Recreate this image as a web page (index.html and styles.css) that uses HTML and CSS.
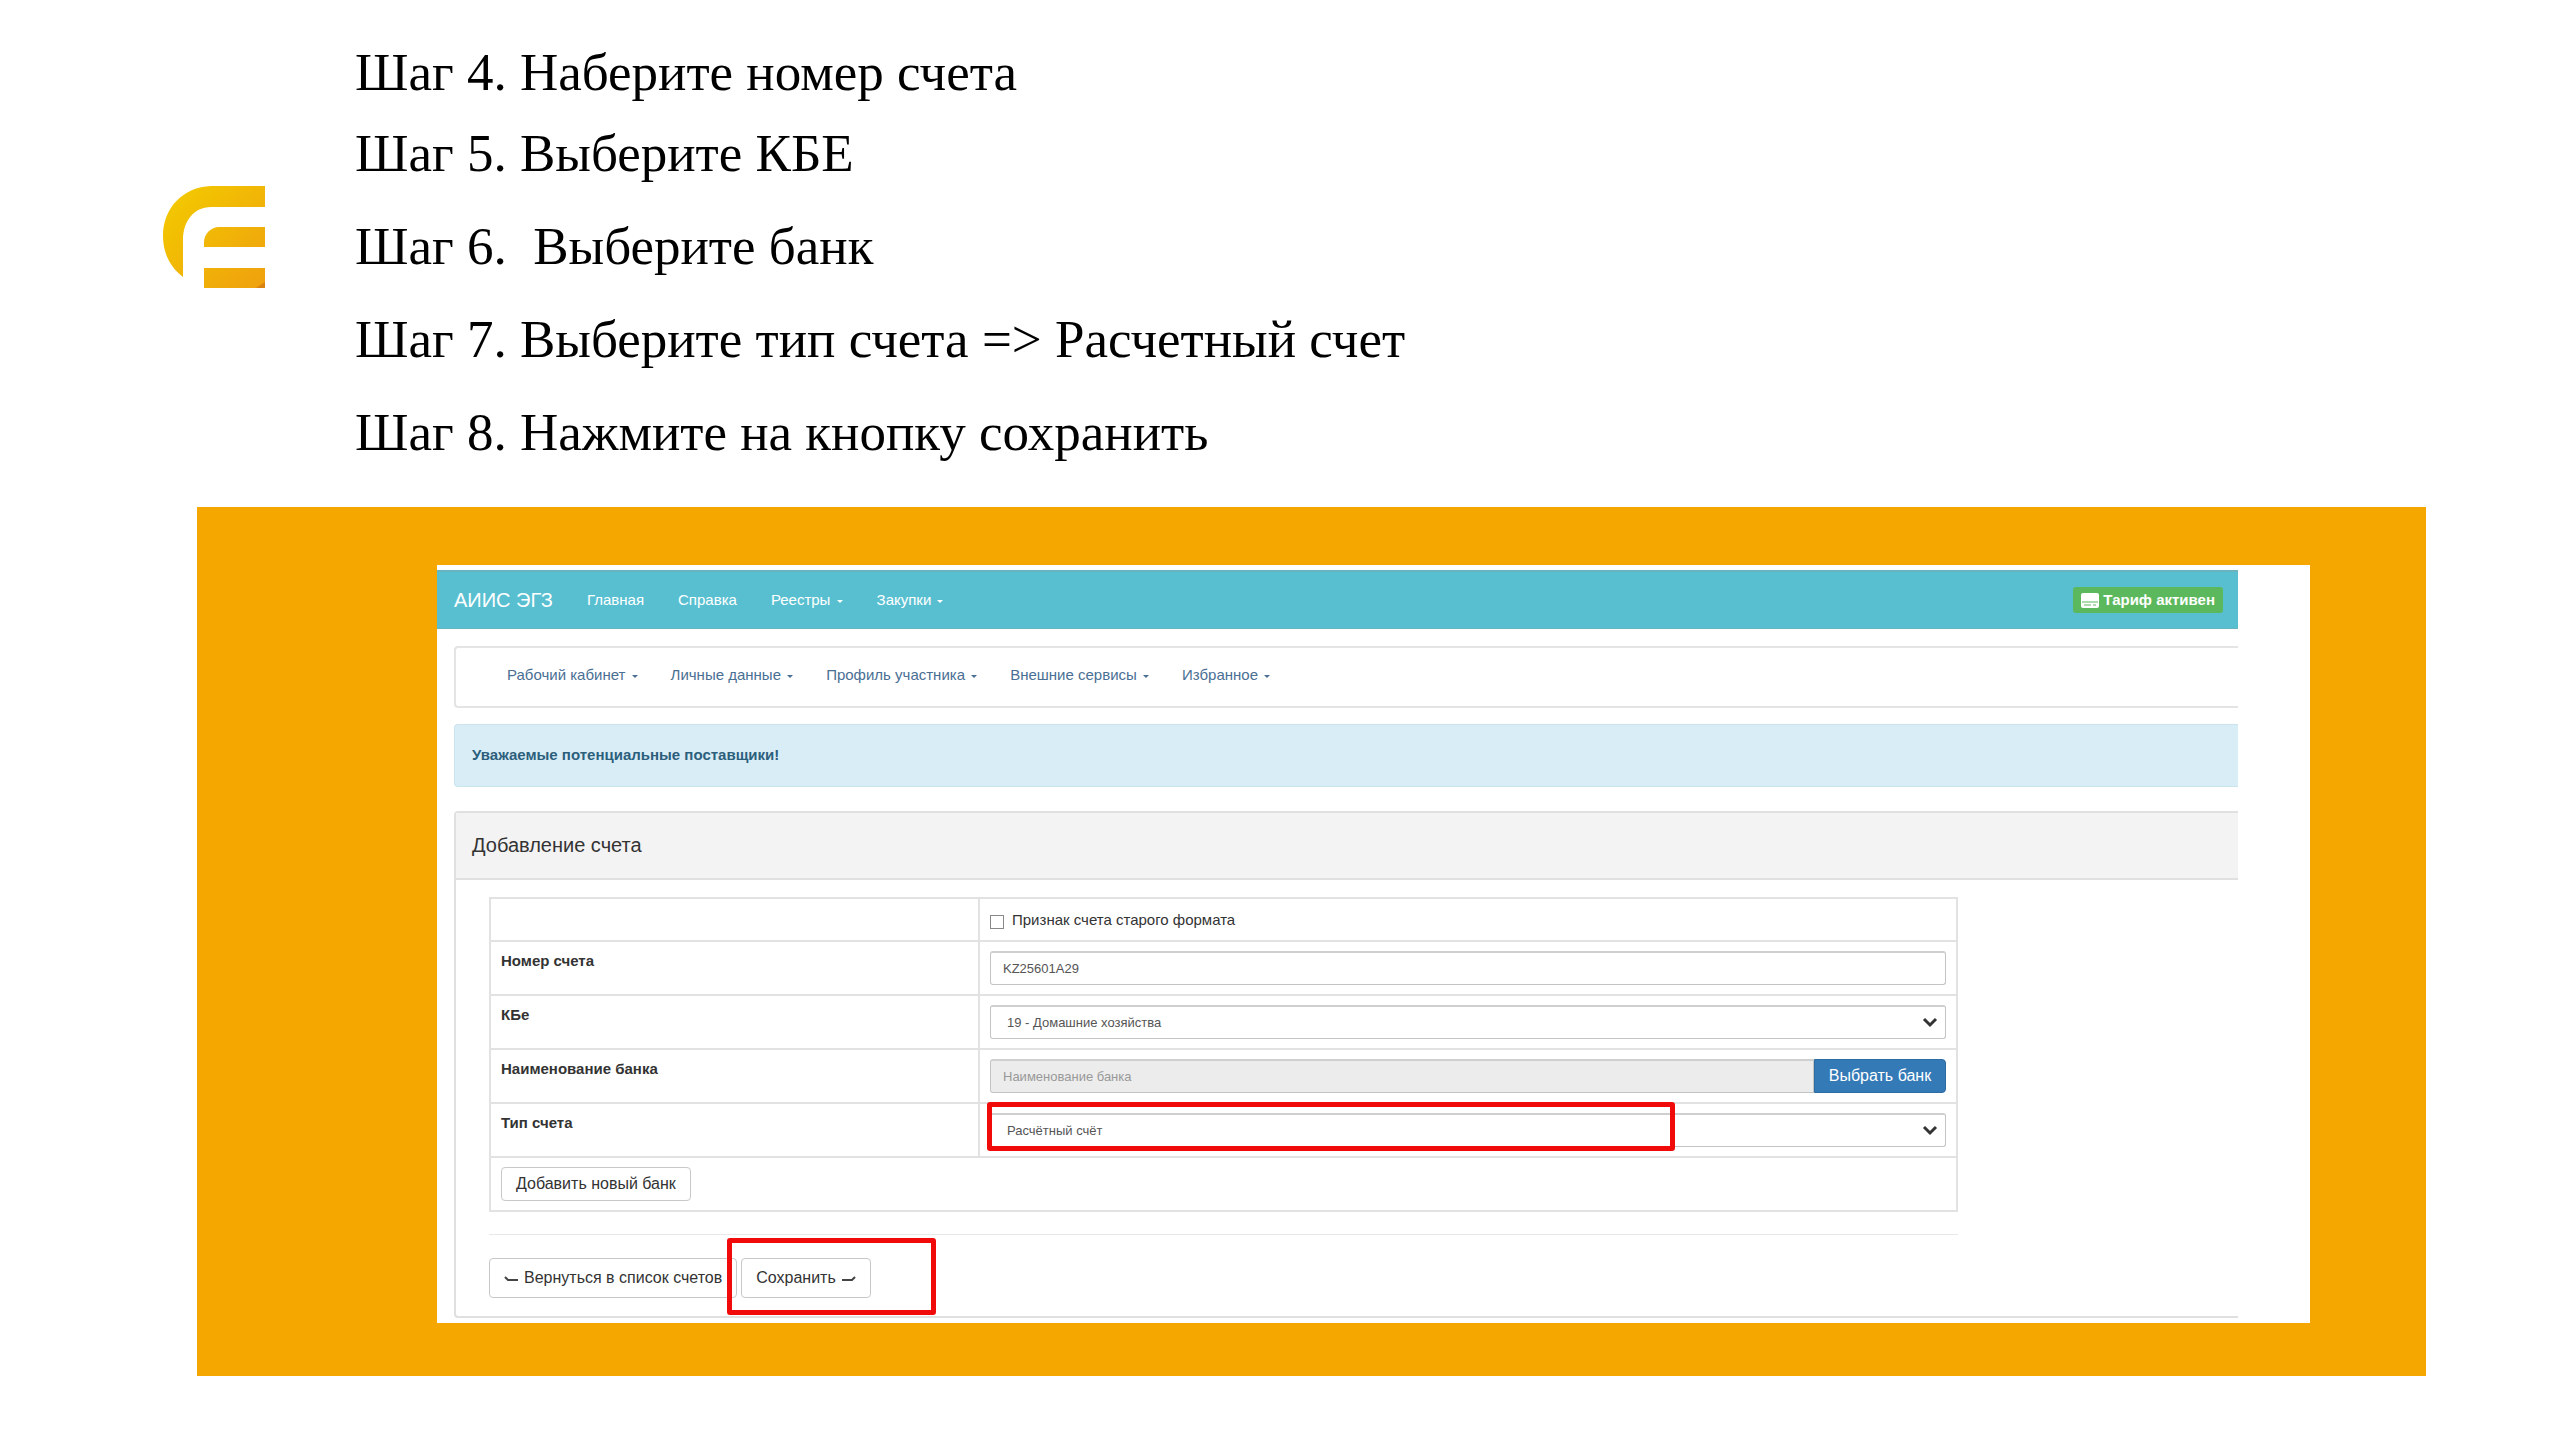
FILE: index.html
```html
<!DOCTYPE html>
<html lang="ru">
<head>
  <meta charset="UTF-8">
  <meta name="viewport" content="width=device-width, initial-scale=1.0">
  <title>Добавление счета</title>
  <link rel="stylesheet" href="styles.css">
</head>
<body>
  <header class="intro">
    <svg class="logo" viewBox="0 0 102 102" aria-hidden="true">
      <defs>
        <linearGradient id="gold" gradientUnits="userSpaceOnUse" x1="10" y1="10" x2="102" y2="102">
          <stop offset="0" stop-color="#f3c800"/>
          <stop offset="1" stop-color="#efa00e"/>
        </linearGradient>
      </defs>
      <g fill="url(#gold)">
        <path d="M102 0H48C20 1 0 22 0 50c0 17 7 31 20 41V54c0-19 11-33 28-33h54z"/>
        <path d="M102 41H56c-8 0-15 7-15 15v5h61z"/>
        <path d="M41 82h61v20H41z"/>
      </g>
      <path d="M102 96v6h-9z" fill="#d9820f"/>
    </svg>
    <div class="steps">
      <p class="step step-first">Шаг 4. Наберите номер счета</p>
      <p class="step">Шаг 5. Выберите КБЕ</p>
      <p class="step">Шаг 6.&nbsp; Выберите банк</p>
      <p class="step">Шаг 7. Выберите тип счета =&gt; Расчетный счет</p>
      <p class="step">Шаг 8. Нажмите на кнопку сохранить</p>
    </div>
  </header>

  <main class="frame">
    <div class="sheet">
      <nav class="topbar">
        <a class="brand" href="#">АИИС ЭГЗ</a>
        <a href="#">Главная</a>
        <a href="#">Справка</a>
        <a href="#">Реестры <span class="caret"></span></a>
        <a href="#">Закупки <span class="caret"></span></a>
        <a class="badge" href="#">
          <svg width="18" height="15" viewBox="0 0 18 15" aria-hidden="true">
            <rect width="18" height="15" rx="2" fill="#fff"/>
            <path d="M1 9h16" stroke="#5cb85c" stroke-width="1"/>
            <path d="M3 12h7M12 12h3" stroke="#5cb85c" stroke-width="1"/>
          </svg>
          Тариф активен
        </a>
      </nav>

      <nav class="subnav">
        <a href="#">Рабочий кабинет <span class="caret"></span></a>
        <a href="#">Личные данные <span class="caret"></span></a>
        <a href="#">Профиль участника <span class="caret"></span></a>
        <a href="#">Внешние сервисы <span class="caret"></span></a>
        <a href="#">Избранное <span class="caret"></span></a>
      </nav>

      <div class="alert">Уважаемые потенциальные поставщики!</div>

      <section class="panel">
        <h1 class="panel-title">Добавление счета</h1>
        <form class="panel-body">
          <table class="form-table">
            <tr class="row-check">
              <td class="name"></td>
              <td>
                <label class="check"><input type="checkbox"> Признак счета старого формата</label>
              </td>
            </tr>
            <tr>
              <td class="name"><label for="number">Номер счета</label></td>
              <td><input class="field" type="text" id="number" value="KZ25601A29"></td>
            </tr>
            <tr>
              <td class="name"><label for="kbe">КБе</label></td>
              <td>
                <div class="select">
                  <select class="field" id="kbe"><option>19 - Домашние хозяйства</option></select>
                  <svg class="chevron" viewBox="0 0 16 11" aria-hidden="true"><path d="M2 2l6 6 6-6"/></svg>
                </div>
              </td>
            </tr>
            <tr>
              <td class="name"><label for="bank">Наименование банка</label></td>
              <td>
                <div class="group">
                  <input class="field" type="text" id="bank" placeholder="Наименование банка" readonly>
                  <button class="btn btn-primary" type="button">Выбрать банк</button>
                </div>
              </td>
            </tr>
            <tr>
              <td class="name"><label for="type">Тип счета</label></td>
              <td>
                <div class="select mark-type">
                  <select class="field" id="type"><option>Расчётный счёт</option></select>
                  <svg class="chevron" viewBox="0 0 16 11" aria-hidden="true"><path d="M2 2l6 6 6-6"/></svg>
                </div>
              </td>
            </tr>
            <tr>
              <td colspan="2"><button class="btn" type="button">Добавить новый банк</button></td>
            </tr>
          </table>

          <div class="actions">
            <button class="btn btn-tall" type="button">
              <svg class="arrow" viewBox="0 0 14 8" aria-hidden="true"><path d="M1 3l3 3h10"/></svg>
              Вернуться в список счетов
            </button>
            <div class="mark-save">
              <button class="btn btn-tall" type="submit">
                Сохранить
                <svg class="arrow" viewBox="0 0 14 8" aria-hidden="true"><path d="M13 3l-3 3H0"/></svg>
              </button>
            </div>
          </div>
        </form>
      </section>
    </div>
  </main>
</body>
</html>
```

FILE: styles.css
```css
*, *::after {
  box-sizing: border-box;
}
body {
  margin: 0;
  background: #fff;
  color: #333;
  font-family: "Liberation Sans", Arial, sans-serif;
  font-size: 15px;
  line-height: 20px;
}
a {
  color: inherit;
  text-decoration: none;
}

/* steps */
.intro {
  display: flex;
  align-items: flex-start;
  gap: 90px;
  padding: 42px 134px 45px 163px;
}
.logo {
  width: 102px;
  height: 102px;
  margin-top: 144px;
}
.step {
  margin: 0 0 33px;
  color: #000;
  font-family: "Liberation Serif", "Times New Roman", serif;
  font-size: 53px;
  line-height: 60px;
}
.step-first {
  margin-bottom: 21px;
}
.step:last-child {
  margin-bottom: 0;
}

/* orange frame */
.frame {
  margin: 0 134px 64px 197px;
  padding: 58px 116px 53px 240px;
  background: #f5a700;
}
.sheet {
  padding: 5px 72px 5px 0;
  background: #fff;
}

.topbar {
  display: flex;
  align-items: center;
  gap: 34px;
  height: 59px;
  padding: 0 15px 0 17px;
  background: #58bfd1;
  border-top: 2px solid #67b4be;
  border-bottom: 1px solid #67b4be;
  color: #fff;
}
.brand {
  font-size: 20px;
}
.caret {
  display: inline-block;
  margin-left: 2px;
  border: 3px solid transparent;
  border-top-color: currentColor;
  border-bottom: 0;
  vertical-align: middle;
}
.badge {
  display: flex;
  align-items: center;
  gap: 4px;
  height: 26px;
  margin-left: auto;
  padding: 0 8px;
  border-radius: 3px;
  background: #5cb85c;
  font-weight: bold;
}

.subnav {
  display: flex;
  gap: 33px;
  margin: 17px 0 16px 17px;
  padding: 17px 51px 21px;
  border: 2px solid #e4e4e4;
  border-right: 0;
  border-radius: 4px 0 0 4px;
  color: #4a6f94;
}
.alert {
  margin: 0 0 24px 17px;
  padding: 20px 17px 21px;
  border: 1px solid #cbe3ec;
  border-right: 0;
  border-radius: 4px 0 0 4px;
  background: #d9edf7;
  color: #2c5f7c;
  font-weight: bold;
}

.panel {
  margin-left: 17px;
  border: 2px solid #e0e0e0;
  border-right: 0;
  border-radius: 4px 0 0 4px;
}
.panel-title {
  margin: 0;
  padding: 20px 16px 21px;
  border-bottom: 2px solid #e0e0e0;
  background: #f3f3f3;
  font-size: 20px;
  font-weight: normal;
  line-height: 24px;
}
.panel-body {
  padding: 17px 0 18px 33px;
}

.form-table {
  width: 84%;
  border-collapse: collapse;
  table-layout: fixed;
}
.form-table td {
  height: 54px;
  padding: 8px 10px;
  border: 2px solid #e2e2e2;
}
.form-table .name {
  width: 489px;
  padding-top: 9px;
  vertical-align: top;
  font-weight: bold;
}
.form-table .row-check td {
  height: 43px;
  padding: 6px 10px;
}
.check {
  display: flex;
  align-items: center;
  gap: 8px;
}
.check input {
  appearance: none;
  width: 14px;
  height: 14px;
  margin: 4px 0 0;
  border: 1px solid #888;
  background: #fff;
}
.field {
  display: block;
  width: 100%;
  height: 34px;
  padding: 0 12px;
  border: 1px solid #c4c4c4;
  border-top: 2px solid #cfcfcf;
  border-radius: 3px;
  background: #fff;
  color: #555;
  font: 13px "Liberation Sans", Arial, sans-serif;
}
.field::placeholder {
  color: #999;
}
.select {
  position: relative;
}
.select .field {
  padding-left: 16px;
  appearance: none;
}
.chevron {
  position: absolute;
  top: 12px;
  right: 8px;
  width: 16px;
  height: 11px;
  fill: none;
  stroke: #333;
  stroke-width: 3;
  pointer-events: none;
}
.group {
  display: flex;
}
.group .field {
  flex: 1;
  border-radius: 3px 0 0 3px;
  background: #ececec;
}

.btn {
  display: flex;
  align-items: center;
  gap: 6px;
  height: 34px;
  padding: 0 14px;
  border: 1px solid #c8c8c8;
  border-radius: 4px;
  background: #fff;
  color: #333;
  font: 16px "Liberation Sans", Arial, sans-serif;
}
.btn-primary {
  border-color: #2e6da4;
  border-radius: 0 4px 4px 0;
  background: #337ab7;
  color: #fff;
}
.btn-tall {
  height: 40px;
}
.arrow {
  width: 14px;
  height: 8px;
  fill: none;
  stroke: #444;
  stroke-width: 2;
}
.actions {
  display: flex;
  gap: 4px;
  width: 84%;
  margin-top: 22px;
  padding-top: 23px;
  border-top: 1px solid #e8e8e8;
}

/* red highlights over the controls */
.mark-type::after,
.mark-save::after {
  content: "";
  position: absolute;
  border: 5px solid #f00a0a;
  border-radius: 3px;
  pointer-events: none;
}
.mark-type::after {
  top: -11px;
  left: -3px;
  width: 72%;
  height: 49px;
}
.mark-save {
  position: relative;
}
.mark-save::after {
  top: -20px;
  right: -65px;
  bottom: -17px;
  left: -14px;
}
```
